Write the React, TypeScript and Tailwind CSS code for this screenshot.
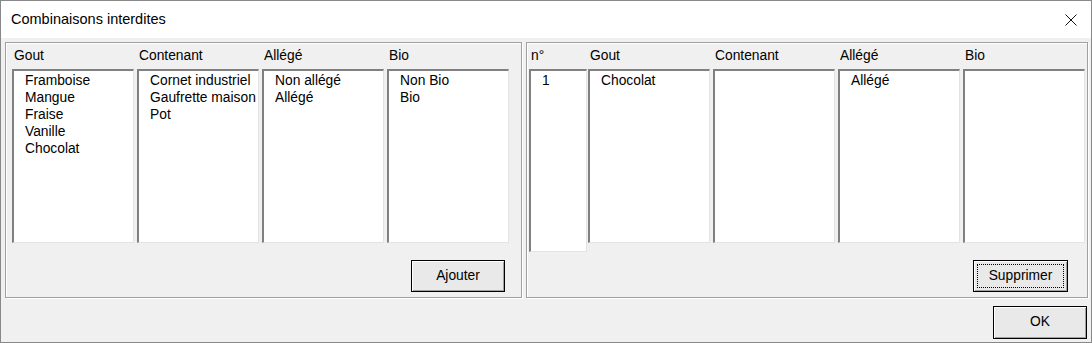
const font = "font-['Liberation_Sans',Arial,sans-serif]";

function ListBox({ items, width, height = "h-[174px]" }: { items: string[]; width: string; height?: string }) {
  return (
    <div
      className={`${width} ${height} bg-white border-t-2 border-l-2 border-r border-b border-t-[#808080] border-l-[#808080] border-r-[#e3e3e3] border-b-[#e3e3e3] pt-[1px] pl-[11px]`}
    >
      {items.map((it) => (
        <div key={it} className="h-[17px] leading-[17px] whitespace-nowrap">
          {it}
        </div>
      ))}
    </div>
  );
}

function Column({
  label,
  items,
  width = "w-[122px]",
  height,
}: {
  label: string;
  items: string[];
  width?: string;
  height?: string;
}) {
  return (
    <div className="flex flex-col">
      <div className="h-[26px] flex items-center pt-[1px] pl-[2px] whitespace-nowrap">{label}</div>
      <ListBox items={items} width={width} height={height} />
    </div>
  );
}

function Button({ label, focused, className = "" }: { label: string; focused?: boolean; className?: string }) {
  return (
    <button
      className={`h-[32px] border border-black bg-[#e9e9e9] shadow-[inset_1px_1px_0_#fff,inset_-1px_-1px_0_#a0a0a0] flex items-center justify-center p-[3px] ${className}`}
    >
      <span
        className={`w-full h-full flex items-center justify-center ${
          focused ? "border border-dotted border-black" : "border border-transparent"
        }`}
      >
        {label}
      </span>
    </button>
  );
}

const panel =
  "h-[256px] border border-[#a0a0a0] shadow-[inset_1px_1px_0_#fff,1px_1px_0_#fff] flex flex-col";

export default function App() {
  return (
    <div
      className={`${font} w-[1092px] h-[343px] border border-[#888] bg-[#f0f0f0] flex flex-col text-[13.8px] text-black`}
    >
      <div className="h-[37px] shrink-0 bg-white flex items-center justify-between pl-[10px] pr-[15px]">
        <span className="text-[14.5px]">Combinaisons interdites</span>
        <svg width="12" height="12" viewBox="0 0 12 12" className="mr-[-1px]">
          <path d="M0.5 0.5 L11.5 11.5 M11.5 0.5 L0.5 11.5" stroke="#111" strokeWidth="1" />
        </svg>
      </div>

      <div className="flex gap-[4px] pl-[4px] pt-[4px]">
        <div className={`${panel} w-[517px]`}>
          <div className="flex gap-[3px] pl-[6px]">
            <Column label="Gout" items={["Framboise", "Mangue", "Fraise", "Vanille", "Chocolat"]} />
            <Column label="Contenant" items={["Cornet industriel", "Gaufrette maison", "Pot"]} />
            <Column label="Allégé" items={["Non allégé", "Allégé"]} />
            <Column label="Bio" items={["Non Bio", "Bio"]} />
          </div>
          <div className="mt-auto flex justify-end pr-[16px] pb-[5px]">
            <Button label="Ajouter" className="w-[94px]" />
          </div>
        </div>

        <div className={`${panel} w-[562px]`}>
          <div className="flex pl-[2px]">
            <Column label="n°" items={["1"]} width="w-[58px]" height="h-[183px]" />
            <div className="flex gap-[3px] ml-[1px]">
              <Column label="Gout" items={["Chocolat"]} />
              <Column label="Contenant" items={[]} />
              <Column label="Allégé" items={["Allégé"]} />
              <Column label="Bio" items={[]} />
            </div>
          </div>
          <div className="mt-auto flex justify-end pr-[19px] pb-[5px]">
            <Button label="Supprimer" focused className="w-[95px]" />
          </div>
        </div>
      </div>

      <div className="flex justify-end pr-[4px] pt-[8px]">
        <Button label="OK" className="w-[94px] h-[33px]" />
      </div>
    </div>
  );
}
